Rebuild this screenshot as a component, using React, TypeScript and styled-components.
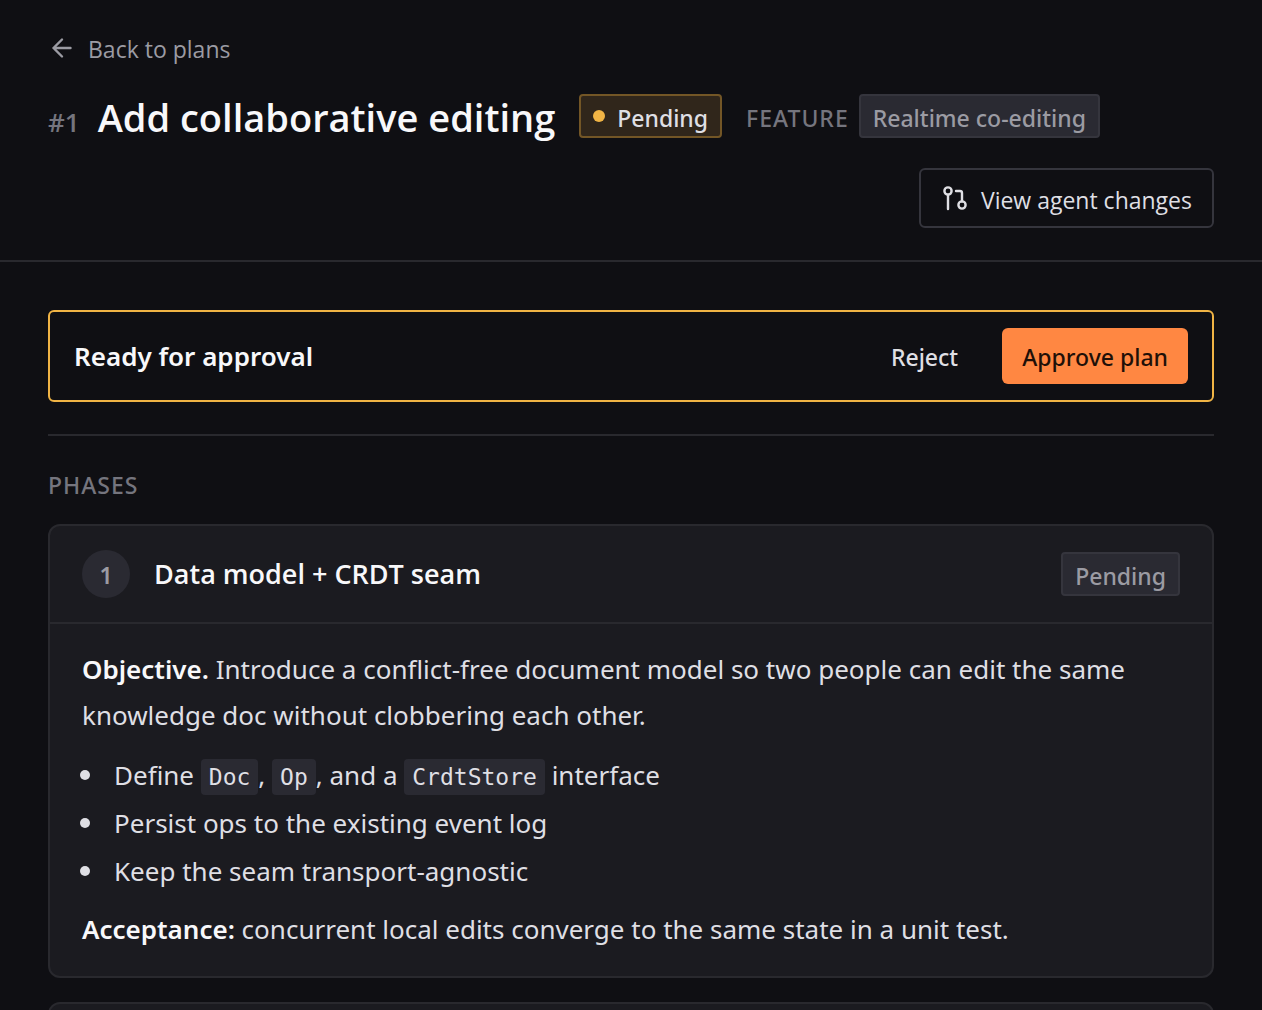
import React from "react";
import styled, { createGlobalStyle, css } from "styled-components";

const sans = `"Noto Sans", "Open Sans", sans-serif`;
const narrow = `"Open Sans", "Noto Sans", sans-serif`;
const mono = `"DejaVu Sans Mono", "Liberation Mono", monospace`;

const GlobalStyle = createGlobalStyle`
  *, *::before, *::after { box-sizing: border-box; }
  body { margin: 0; background: #0f0f13; color: #dfdfe4; font-family: ${sans}; }
  h1, h2, h3, p, ul { margin: 0; padding: 0; }
  button { font-family: inherit; cursor: pointer; }
`;

const Shell = styled.div`
  height: 100vh;
  overflow: hidden;
`;

const Header = styled.header`
  display: flex;
  flex-direction: column;
  align-items: stretch;
  padding: 32px 48px;
  border-bottom: 2px solid #29292e;
`;

const BackLink = styled.a`
  display: inline-flex;
  align-self: flex-start;
  align-items: center;
  gap: 12px;
  color: #9b9ba3;
  font-family: ${narrow};
  font-size: 23px;
  line-height: 34px;
  text-decoration: none;
  svg { flex: none; margin-bottom: 2px; }
`;

const TitleRow = styled.div`
  display: flex;
  flex-wrap: wrap;
  align-items: center;
  gap: 28px 24px;
  margin-top: 26px;
`;

const TitleGroup = styled.div`
  display: flex;
  align-items: baseline;
  gap: 18px;
  padding-top: 2px;
  font-family: ${narrow};
`;

const PlanNumber = styled.span`
  color: #75757e;
  font-size: 26px;
  font-weight: 600;
  line-height: 30px;
`;

const Title = styled.h1`
  color: #f8f8fa;
  font-size: 38px;
  font-weight: 600;
  line-height: 46px;
`;

const FeatureGroup = styled.div`
  display: flex;
  align-items: baseline;
  gap: 10px;
`;

const Eyebrow = styled.span`
  color: #75757e;
  font-size: 23px;
  font-weight: 500;
  line-height: 34px;
  text-transform: uppercase;
  letter-spacing: 1px;
`;

const Badge = styled.span<{ $tone?: "warning" | "neutral" }>`
  display: inline-flex;
  align-items: center;
  height: 44px;
  padding: 3px 12px 0;
  border: 2px solid #35353d;
  border-radius: 4px;
  background: #2a2a32;
  color: #9b9ba3;
  font-size: 23px;
  font-weight: 500;
  white-space: nowrap;
  ${(p) =>
    p.$tone === "warning" &&
    css`
      border-color: #735626;
      background: #30261b;
      color: #dfdfe4;
    `}
`;

const Dot = styled.i`
  width: 12px;
  height: 12px;
  margin: 0 12px 3px 0;
  border-radius: 50%;
  background: #f0b445;
`;

const Button = styled.button<{ $kind: "outline" | "ghost" | "primary" }>`
  display: inline-flex;
  align-items: center;
  gap: 12px;
  height: 56px;
  padding: 2px 20px 0;
  border: 0;
  border-radius: 6px;
  background: transparent;
  color: #dfdfe4;
  font-size: 23px;
  font-weight: 500;
  white-space: nowrap;
  svg { flex: none; margin-bottom: 4px; }
  ${(p) =>
    p.$kind === "outline" &&
    css`
      height: 60px;
      margin-left: auto;
      padding-top: 4px;
      border: 2px solid #35353d;
      font-family: ${narrow};
      font-weight: 400;
    `}
  ${(p) =>
    p.$kind === "primary" &&
    css`
      background: #ff8742;
      color: #1f1008;
    `}
`;

const Main = styled.main`
  padding: 48px;
`;

const Approval = styled.section`
  display: flex;
  align-items: center;
  justify-content: space-between;
  padding: 16px 24px;
  border: 2px solid #f0b445;
  border-radius: 6px;
`;

const Heading = styled.h2`
  color: #f8f8fa;
  font-size: 26px;
  font-weight: 600;
  line-height: 40px;
`;

const PhaseTitle = styled.h3`
  flex: 1;
  color: #f8f8fa;
  font-family: ${narrow};
  font-size: 27px;
  font-weight: 600;
  line-height: 40px;
`;

const Actions = styled.div`
  display: flex;
  gap: 24px;
`;

const Phases = styled.section`
  display: flex;
  flex-direction: column;
  margin-top: 32px;
  padding-top: 32px;
  border-top: 2px solid #29292e;
`;

const PhaseList = styled.div`
  display: flex;
  flex-direction: column;
  gap: 24px;
  margin-top: 22px;
`;

const Card = styled.article`
  min-height: 200px;
  border: 2px solid #29292e;
  border-radius: 12px;
  background: #1b1b20;
`;

const CardHeader = styled.div`
  display: flex;
  align-items: center;
  gap: 24px;
  padding: 24px 32px;
  border-bottom: 2px solid #29292e;
`;

const Step = styled.span`
  display: grid;
  place-items: center;
  width: 48px;
  height: 48px;
  padding-top: 2px;
  border-radius: 50%;
  background: #2a2a32;
  color: #9b9ba3;
  font-size: 23px;
  font-weight: 600;
`;

const CardBody = styled.div`
  padding: 22px 32px 24px;
  font-size: 26px;
  line-height: 46px;
  strong { color: #f8f8fa; font-weight: 600; }
`;

const Bullets = styled.ul`
  display: flex;
  flex-direction: column;
  gap: 2px;
  margin: 14px 0 12px;
  list-style: none;
`;

const Bullet = styled.li`
  display: flex;
  &::before {
    content: "";
    flex: none;
    width: 10px;
    height: 10px;
    margin: 18px 24px 0 -2px;
    border-radius: 50%;
    background: #dfdfe4;
  }
`;

const Code = styled.code`
  padding: 5px 8px;
  border-radius: 4px;
  background: #2a2a32;
  font-family: ${mono};
  font-size: 23px;
  line-height: 24px;
`;

const ArrowLeft = () => (
  <svg width="28" height="28" viewBox="0 0 28 28" fill="none" stroke="currentColor" strokeWidth="2.4" strokeLinecap="round" strokeLinejoin="round" aria-hidden="true">
    <path d="M22.500 14H5.500M14 5.500L5.500 14l8.500 8.500" />
  </svg>
);

const PullRequest = () => (
  <svg width="28" height="28" viewBox="0 0 28 28" fill="none" stroke="currentColor" strokeWidth="2.400" strokeLinecap="round" strokeLinejoin="round" aria-hidden="true">
    <circle cx="7" cy="7" r="3.600" />
    <circle cx="21" cy="21" r="3.600" />
    <path d="M7 10.600V25M15 7h4a2 2 0 0 1 2 2v8.400" />
  </svg>
);

export default function App() {
  return (
    <>
      <GlobalStyle />
      <Shell>
        <Header>
          <BackLink href="#plans"><ArrowLeft />Back to plans</BackLink>
          <TitleRow>
            <TitleGroup>
              <PlanNumber>#1</PlanNumber>
              <Title>Add collaborative editing</Title>
            </TitleGroup>
            <Badge $tone="warning"><Dot />Pending</Badge>
            <FeatureGroup>
              <Eyebrow>Feature</Eyebrow>
              <Badge>Realtime co-editing</Badge>
            </FeatureGroup>
            <Button type="button" $kind="outline"><PullRequest />View agent changes</Button>
          </TitleRow>
        </Header>
        <Main>
          <Approval>
            <Heading>Ready for approval</Heading>
            <Actions>
              <Button type="button" $kind="ghost">Reject</Button>
              <Button type="button" $kind="primary">Approve plan</Button>
            </Actions>
          </Approval>
          <Phases>
            <Eyebrow as="h2">Phases</Eyebrow>
            <PhaseList>
              <Card>
                <CardHeader>
                  <Step>1</Step>
                  <PhaseTitle>Data model + CRDT seam</PhaseTitle>
                  <Badge>Pending</Badge>
                </CardHeader>
                <CardBody>
                  <p>
                    <strong>Objective.</strong> Introduce a conflict-free document model so two people can edit the same knowledge doc without clobbering each other.
                  </p>
                  <Bullets>
                    <Bullet>
                      <span>Define <Code>Doc</Code>, <Code>Op</Code>, and a <Code>CrdtStore</Code> interface</span>
                    </Bullet>
                    <Bullet>Persist ops to the existing event log</Bullet>
                    <Bullet>Keep the seam transport-agnostic</Bullet>
                  </Bullets>
                  <p>
                    <strong>Acceptance:</strong> concurrent local edits converge to the same state in a unit test.
                  </p>
                </CardBody>
              </Card>
              <Card />
            </PhaseList>
          </Phases>
        </Main>
      </Shell>
    </>
  );
}
